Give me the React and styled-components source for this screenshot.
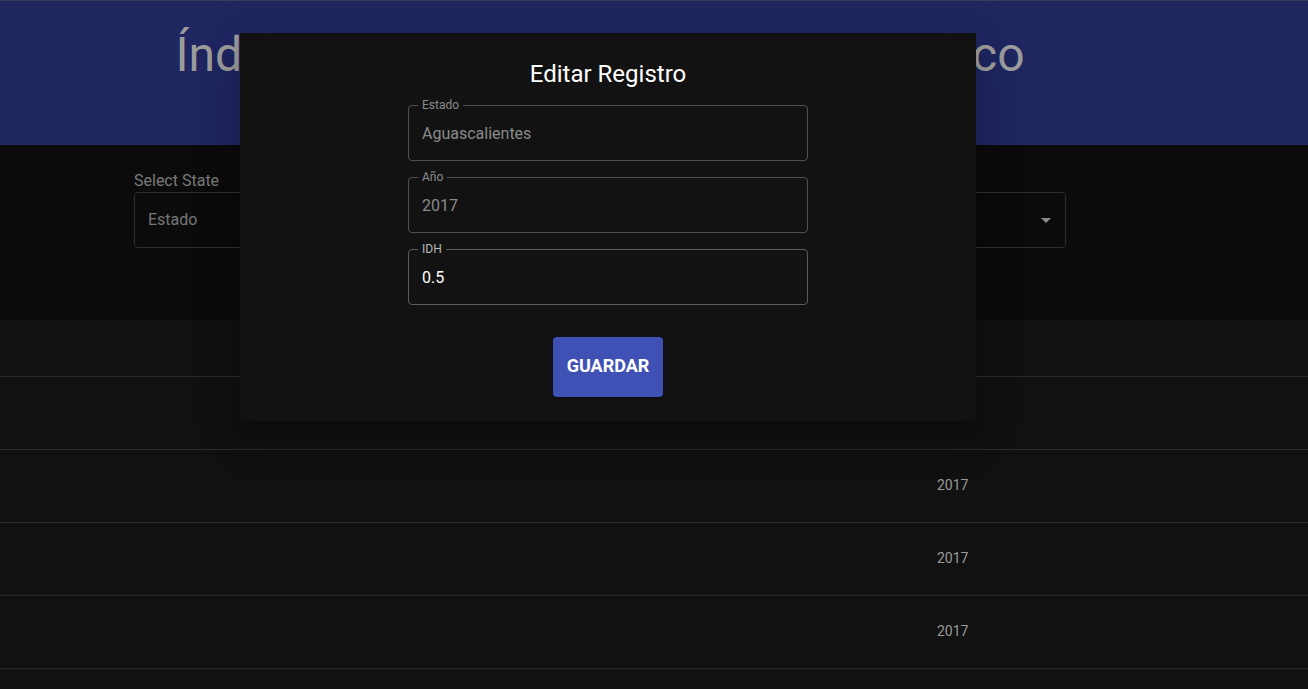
import React from "react";
import styled, { createGlobalStyle } from "styled-components";

const Global = createGlobalStyle`
  html, body { margin: 0; padding: 0; background: #111111; }
  body { font-family: Roboto, "Liberation Sans", Arial, sans-serif; overflow: hidden; }
  * { box-sizing: border-box; }
`;

const Screen = styled.div`
  position: relative;
  width: 1308px;
  height: 689px;
  overflow: hidden;
  background: #111111;
`;

const Header = styled.header`
  background: #1f2660;
  border-top: 1px solid #3a3c52;
  height: 145px;
  padding-top: 26px;
`;

const Page = styled.div`
  width: 1200px;
`;

const Title = styled.h1`
  margin: 0;
  text-align: center;
  font-size: 48px;
  font-weight: 400;
  line-height: 56px;
  color: #9c9c9c;
  white-space: nowrap;
`;

const FilterArea = styled.section`
  background: #0b0b0b;
  height: 175px;
  padding-top: 24px;
`;

const Container = styled.div`
  width: 932px;
  margin: 0 auto;
`;

const FilterLabel = styled.div`
  font-size: 16px;
  line-height: 23px;
  color: #7a7a7a;
`;

const SelectBox = styled.div`
  position: relative;
  height: 56px;
  border: 1px solid #2e2e2e;
  border-radius: 4px;
  display: flex;
  align-items: center;
  padding-left: 13px;
  padding-bottom: 1px;
  font-size: 16px;
  color: #767676;
`;

const Arrow = styled.svg`
  position: absolute;
  right: 7px;
  top: 50%;
  transform: translateY(-50%);
  width: 24px;
  height: 24px;
  fill: #8c8c8c;
`;

const Table = styled.div`
  background: #111111;
`;

const HeadRow = styled.div`
  height: 57px;
  border-bottom: 1px solid #2c2c2c;
`;

const Row = styled.div`
  display: grid;
  grid-template-columns: 921px 1fr;
  height: 73px;
  border-bottom: 1px solid #2c2c2c;
  align-items: center;
`;

const Cell = styled.div`
  padding: 0 0 2px 16px;
  font-size: 14px;
  color: #9a9a9a;
`;

const Modal = styled.div`
  position: absolute;
  left: 240px;
  top: 33px;
  width: 736px;
  background: #121212;
  padding: 25px 0 24px;
  display: flex;
  flex-direction: column;
  align-items: center;
  box-shadow: 0 11px 15px -7px rgba(0,0,0,0.2), 0 24px 38px 3px rgba(0,0,0,0.1), 0 9px 46px 8px rgba(0,0,0,0.08);
`;

const ModalTitle = styled.h2`
  margin: 0 0 15px;
  font-size: 24px;
  font-weight: 400;
  line-height: 32px;
  color: #ffffff;
`;

const Fields = styled.div`
  width: 400px;
  display: flex;
  flex-direction: column;
  gap: 16px;
`;

const Field = styled.div`
  position: relative;
  height: 56px;
  border: 1px solid ${(p) => (p.$disabled ? "#505050" : "#5c5c5c")};
  border-radius: 4px;
  display: flex;
  align-items: center;
  padding-left: 13px;
  font-size: 16px;
  color: ${(p) => (p.$disabled ? "#8a8a8a" : "#ffffff")};
`;

const FieldLabel = styled.span`
  position: absolute;
  left: 9px;
  top: -8px;
  padding: 0 4px;
  background: #121212;
  font-size: 12px;
  line-height: 14px;
  color: ${(p) => (p.$disabled ? "#8a8a8a" : "#b8b8b8")};
`;

const SaveButton = styled.button`
  margin-top: 32px;
  width: 110px;
  height: 60px;
  border: none;
  border-radius: 4px;
  background: #3f51b5;
  color: #ffffff;
  font-family: Roboto, "Liberation Sans", Arial, sans-serif;
  font-size: 18px;
  font-weight: 700;
  letter-spacing: 0;
  padding: 0 0 4px;
  box-shadow: 0 3px 1px -2px rgba(0,0,0,0.2), 0 2px 2px 0 rgba(0,0,0,0.14), 0 1px 5px 0 rgba(0,0,0,0.12);
`;

const rows = ["2017", "2017", "2017", ""];

export default function App() {
  return (
    <Screen>
      <Global />
      <Header>
        <Page>
          <Title>Índice de Desarrollo Humano en Mexico</Title>
        </Page>
      </Header>
      <FilterArea>
        <Page>
          <Container>
            <FilterLabel>Select State</FilterLabel>
            <SelectBox>
              Estado
              <Arrow viewBox="0 0 24 24"><path d="M7 10l5 5 5-5z" /></Arrow>
            </SelectBox>
          </Container>
        </Page>
      </FilterArea>
      <Table>
        <HeadRow />
        <Row><div /><Cell /></Row>
        {rows.map((y, i) => (
          <Row key={i}>
            <div />
            <Cell>{y}</Cell>
          </Row>
        ))}
      </Table>
      <Modal>
        <ModalTitle>Editar Registro</ModalTitle>
        <Fields>
          <Field $disabled>
            <FieldLabel $disabled>Estado</FieldLabel>
            Aguascalientes
          </Field>
          <Field $disabled>
            <FieldLabel $disabled>Año</FieldLabel>
            2017
          </Field>
          <Field>
            <FieldLabel>IDH</FieldLabel>
            0.5
          </Field>
        </Fields>
        <SaveButton>GUARDAR</SaveButton>
      </Modal>
    </Screen>
  );
}
